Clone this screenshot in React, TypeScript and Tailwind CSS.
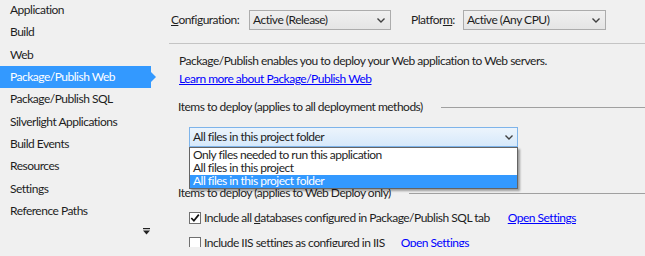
import React from "react";

const font = { fontFamily: 'Lato, "Noto Sans", sans-serif' };

const sideItems = [
  "Application",
  "Build",
  "Web",
  "Package/Publish Web",
  "Package/Publish SQL",
  "Silverlight Applications",
  "Build Events",
  "Resources",
  "Settings",
  "Reference Paths",
];

function Chevron({ className = "" }: { className?: string }) {
  return (
    <svg width="8" height="5" viewBox="0 0 8 5" className={className}>
      <path d="M0.5 0.5 L4 4 L7.5 0.5" fill="none" stroke="#404040" strokeWidth="1.4" />
    </svg>
  );
}

function Combo({ text, width }: { text: string; width: string }) {
  return (
    <div
      className={`${width} h-[20px] border border-[#acacac] bg-gradient-to-b from-[#f0f0f0] to-[#e5e5e5] flex items-center pl-[3px] pr-[5px]`}
    >
      <span className="flex-1 whitespace-nowrap">{text}</span>
      <Chevron />
    </div>
  );
}

function Checkbox({ checked }: { checked?: boolean }) {
  return (
    <div className="w-[12px] h-[12px] border border-[#707070] bg-white flex items-center justify-center shrink-0">
      {checked && (
        <svg width="10" height="10" viewBox="0 0 10 10">
          <path d="M1.3 5 L3.9 7.8 L8.8 1.6" fill="none" stroke="#111" strokeWidth="1.7" />
        </svg>
      )}
    </div>
  );
}

export default function App() {
  return (
    <div
      className="w-[645px] h-[256px] bg-[#f0f0f0] flex overflow-hidden text-[12px] tracking-[-0.5px] text-[#1e1e1e] leading-none"
      style={font}
    >
      <div className="w-[160px] shrink-0 flex flex-col pt-0 -mt-[1px]">
        {sideItems.map((it) =>
          it === "Package/Publish Web" ? (
            <div key={it} className="h-[22.33px] shrink-0 flex items-center">
              <div className="w-[151px] h-full bg-[#3399ff] text-white flex items-center pl-[10px] whitespace-nowrap">
                {it}
              </div>
              <div className="w-0 h-0 border-y-[5px] border-y-transparent border-l-[5px] border-l-[#3399ff]" />
            </div>
          ) : (
            <div key={it} className="h-[22.33px] shrink-0 flex items-center pl-[10px] whitespace-nowrap">
              {it}
            </div>
          )
        )}
        <div className="flex justify-end pr-[10px] mt-[6px]">
          <svg width="7" height="7" viewBox="0 0 7 7">
            <rect x="0" y="0" width="7" height="1.2" fill="#222" />
            <path d="M0 2.5 H7 L3.5 6.5 Z" fill="#222" />
          </svg>
        </div>
      </div>

      <div className="flex-1 h-[247px] overflow-hidden">
        <div className="flex flex-col">
          <div className="mt-[10px] h-[20px] flex items-center">
            <div className="ml-[11px] w-[78px] whitespace-nowrap">
              <span className="underline">C</span>onfiguration:
            </div>
            <Combo text="Active (Release)" width="w-[142px]" />
            <div className="ml-[20px] w-[52px] whitespace-nowrap">
              Platfor<span className="underline">m</span>:
            </div>
            <Combo text="Active (Any CPU)" width="w-[143px]" />
          </div>

          <div className="mt-[13px] ml-[9px] h-px bg-[#c4c4c4]" />

          <div className="mt-[8px] h-[18px] flex items-center pl-[19px] whitespace-nowrap">
            Package/Publish enables you to deploy your Web application to Web servers.
          </div>
          <div className="h-[18px] flex items-center pl-[19px] whitespace-nowrap">
            <span className="text-[#0000ff] underline">Learn more about Package/Publish Web</span>
          </div>

          <div className="mt-[10px] h-[18px] flex items-center pl-[18px]">
            <span className="whitespace-nowrap">Items to deploy (applies to all deployment methods)</span>
            <div className="flex-1 ml-[18px] h-px bg-[#a0a0a0]" />
          </div>

          <div className="mt-[11px] ml-[29px] w-[329px] h-[20px] relative z-10">
            <div className="h-full border border-[#7eb4ea] bg-gradient-to-b from-[#ecf4fc] to-[#d6e9fb] flex items-center pl-[3px] pr-[4px]">
              <span className="flex-1 whitespace-nowrap">All files in this project folder</span>
              <Chevron />
            </div>
            <div className="absolute left-0 top-[20px] w-[329px] h-[42px] bg-white border border-[#646464] shadow-[2px_2px_2px_rgba(0,0,0,0.35)] flex flex-col">
              <div className="h-[13.33px] flex items-center pl-[3px] whitespace-nowrap">
                Only files needed to run this application
              </div>
              <div className="h-[13.33px] flex items-center pl-[3px] whitespace-nowrap">
                All files in this project
              </div>
              <div className="h-[13.33px] flex items-center pl-[3px] bg-[#3399ff] text-white whitespace-nowrap">
                All files in this project folder
              </div>
            </div>
          </div>

          <div className="mt-[37px] h-[18px] flex items-center pl-[18px]">
            <span className="whitespace-nowrap">Items to deploy (applies to Web Deploy only)</span>
            <div className="flex-1 ml-[18px] h-px bg-[#a0a0a0]" />
          </div>

          <div className="mt-[7px] h-[18px] flex items-center pl-[29px] whitespace-nowrap">
            <Checkbox checked />
            <span className="ml-[3px]">
              Include all <span className="underline">d</span>atabases configured in Package/Publish SQL tab
            </span>
            <span className="ml-[18px] text-[#0000ff] underline">Open Settings</span>
          </div>
          <div className="mt-[7px] h-[18px] flex items-center pl-[29px] whitespace-nowrap">
            <Checkbox />
            <span className="ml-[3px]">Include IIS settings as configured in IIS</span>
            <span className="ml-[16px] text-[#0000ff] underline">Open Settings</span>
          </div>
        </div>
      </div>
    </div>
  );
}
